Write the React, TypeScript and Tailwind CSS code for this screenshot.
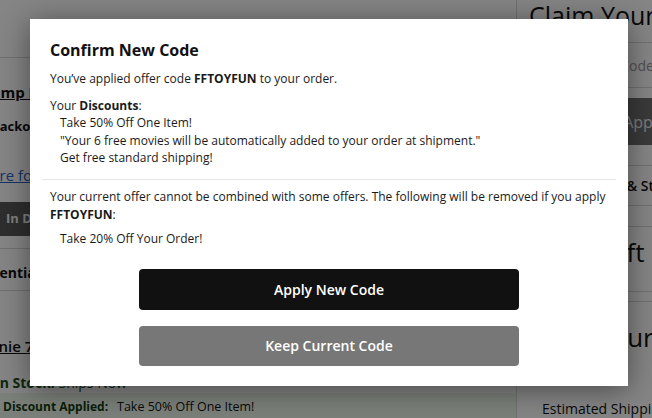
export default function App() {
  return (
    <div className="relative w-[652px] h-[418px] overflow-hidden bg-white flex font-['Open_Sans',sans-serif] text-[#111]">
      {/* Left column (page behind) */}
      <div className="w-[516px] shrink-0 flex flex-col whitespace-nowrap">
        <div className="h-[58px] shrink-0 border-b border-[#d9d9d9]" />
        <div className="mt-[24px] -ml-[28px] text-[15px] leading-[20px] font-bold underline">Champ Lamp Shade Deluxe</div>
        <div className="mt-[15px] -ml-[9px] text-[13px] leading-[18px] font-bold">Backordered</div>
        <div className="mt-[30px] -ml-[23px] text-[15px] leading-[20px] underline text-[#2f5fc4]">More for you</div>
        <div className="mt-[17px] h-[34px] shrink-0 bg-[#595959] flex items-center pl-[6px] text-[13px] font-bold text-[#f2f2f2]">In Default Cart</div>
        <div className="mt-[12px] h-px shrink-0 bg-[#d9d9d9]" />
        <div className="mt-[14px] -ml-[24px] text-[14px] leading-[20px] font-bold">Potential Savings</div>
        <div className="mt-[7px] h-px shrink-0 bg-[#d9d9d9]" />
        <div className="mt-[45px] -ml-[29px] text-[15px] leading-[20px] font-semibold underline">Minnie 7 Inch Plush</div>
        <div className="mt-[17px] -ml-[5px] text-[14px] leading-[20px] text-[#1d4a1d]">
          <span className="font-bold">In Stock!</span> Ships Now
        </div>
        <div className="h-[30px] shrink-0 bg-[#edf5ea] pt-[4px] pl-[3px] text-[12.5px] leading-[20px] flex">
          <span className="font-bold text-[12px] text-[#123d12] w-[114px]">Discount Applied:</span>
          <span>Take 50% Off One Item!</span>
        </div>
      </div>

      {/* Right column (page behind) */}
      <div className="flex-1 border-l border-[#d9d9d9] flex flex-col whitespace-nowrap">
        <div className="h-[43px] shrink-0 border-b border-[#d9d9d9] pl-3 pt-[2px] text-[25px] leading-[26px]">Claim Your Offer</div>
        <div className="h-[45px] shrink-0 border-b border-[#d9d9d9] pl-[17px] flex items-center text-[14px] text-[#9a9a9a]">Enter Promo Code</div>
        <div className="mt-[10px] ml-3 w-[230px] h-[47px] shrink-0 bg-[#707070] flex items-center justify-center text-[16px] text-[#eeeeee]">Apply</div>
        <div className="mt-[20px] h-[41px] shrink-0 border-y border-[#d9d9d9] pl-[61px] flex items-center text-[14px] font-semibold">Pickup &amp; Store Info</div>
        <div className="mt-[20px] h-px shrink-0 bg-[#d9d9d9]" />
        <div className="mt-[10px] pl-[29px] text-[26px] leading-[30px]">Add Gift Card</div>
        <div className="mt-[24px] h-px shrink-0 bg-[#d9d9d9]" />
        <div className="mt-[9px] h-px shrink-0 bg-[#d9d9d9]" />
        <div className="mt-[20px] pl-[50px] text-[26px] leading-[30px]">In Your Order</div>
        <div className="mt-[47px] pl-[25px] text-[14px] leading-[20px]">Estimated Shipping</div>
      </div>

      {/* Overlay */}
      <div className="absolute inset-0 bg-black/[0.48]" />

      {/* Modal */}
      <div className="absolute left-[30px] top-[19px] w-[598px] bg-white pt-[20px] pb-[20px] shadow-[0_4px_28px_rgba(0,0,0,0.45)] text-[#1a1a1a]">
        <div className="px-5">
          <h2 className="text-[16px] leading-[22px] font-bold text-[#111]">Confirm New Code</h2>
          <p className="mt-[9px] text-[12px] leading-[17.6px]">
            You’ve applied offer code <b>FFTOYFUN</b> to your order.
          </p>
          <div className="mt-[9px] text-[12px] leading-[17.6px]">
            <p>
              Your <b>Discounts</b>:
            </p>
            <ul className="pl-[10px]">
              <li>Take 50% Off One Item!</li>
              <li>"Your 6 free movies will be automatically added to your order at shipment."</li>
              <li>Get free standard shipping!</li>
            </ul>
          </div>
        </div>
        <div className="mx-3 mt-[12px] h-px bg-[#e6e6e6]" />
        <div className="px-5 mt-[8px] text-[12px] leading-[17.6px]">
          <p>
            Your current offer cannot be combined with some offers. The following will be removed if you apply{" "}
            <b>FFTOYFUN</b>:
          </p>
          <ul className="pl-[10px] mt-[7px]">
            <li>Take 20% Off Your Order!</li>
          </ul>
        </div>
        <div className="mt-[21px] flex flex-col items-center gap-[16px]">
          <button className="w-[380px] h-[41px] rounded-[4px] bg-[#111111] text-white text-[14px] font-semibold">
            Apply New Code
          </button>
          <button className="w-[380px] h-[40px] rounded-[4px] bg-[#777777] text-white text-[14px] font-semibold">
            Keep Current Code
          </button>
        </div>
      </div>
    </div>
  );
}
